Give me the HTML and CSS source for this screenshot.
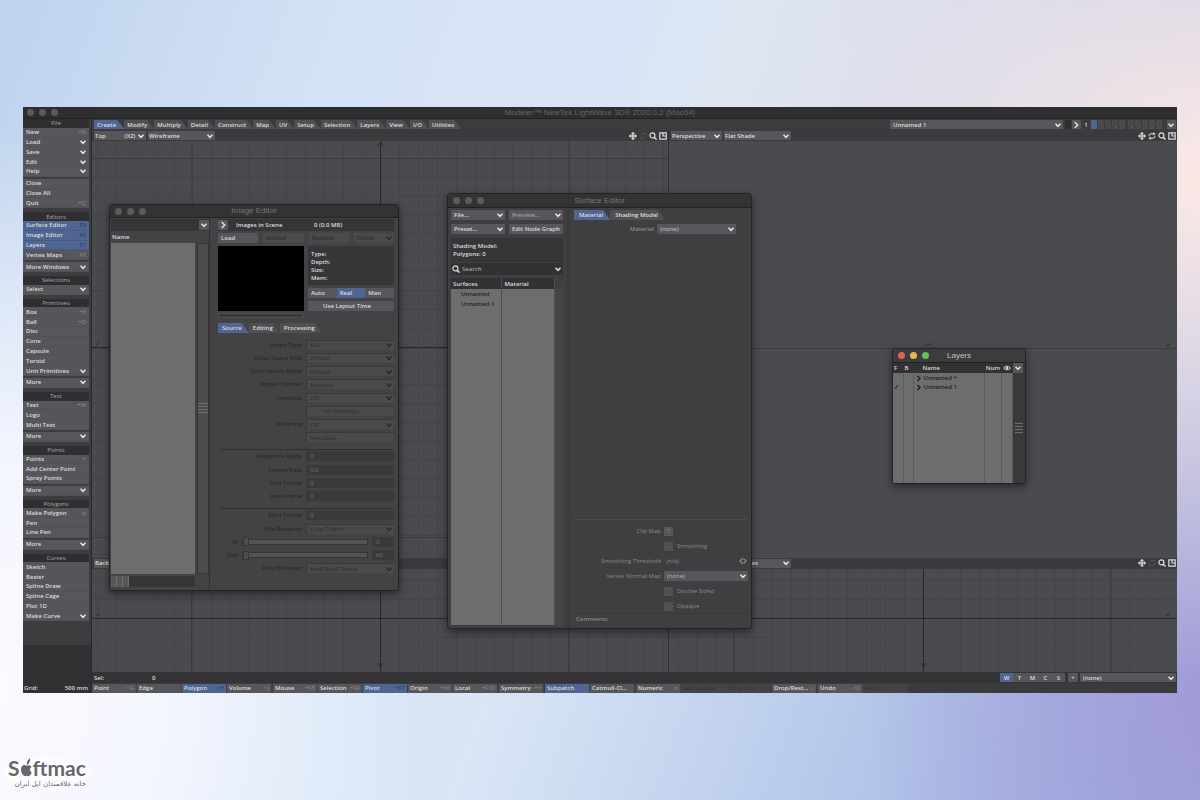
FILE: index.html
```html
<!DOCTYPE html>
<html lang="en">
<head>
<meta charset="utf-8">
<title>Modeler</title>
<link rel="stylesheet" href="styles.css">
</head>
<body>
<svg class="defs" aria-hidden="true">
  <symbol id="move" viewBox="0 0 8 8"><path d="M4 0l1.6 1.8H4.6v1.6h1.6V2.4L8 4 6.2 5.6V4.6H4.6v1.6h1L4 8 2.4 6.2h1V4.6H1.8v1L0 4l1.8-1.6v1h1.6V1.8h-1z" fill="currentColor" stroke="currentColor" stroke-width=".4"/></symbol>
  <symbol id="spin" viewBox="0 0 8 8"><path d="M1.200 4.400V3.200Q1.200 1.800 2.800 1.800H5.500M6.800 3.600v1.200Q6.800 6.200 5.200 6.200H2.500" fill="none" stroke="currentColor"/><path d="M5 .3L7.600 1.800 5 3.300zM3 7.700L.4 6.200 3 4.700z" fill="currentColor"/></symbol>
  <symbol id="lens" viewBox="0 0 8 8"><circle cx="3.400" cy="3.400" r="2.500" fill="none" stroke="currentColor" stroke-width="1.200"/><path d="M5.200 5.200L7.600 7.600" stroke="currentColor" stroke-width="1.500"/></symbol>
  <symbol id="maxi" viewBox="0 0 8 8"><path d="M.8.8h6.4v6.400H.8zM4 1v3h3" fill="none" stroke="currentColor" stroke-width="1.200"/></symbol>
  <symbol id="chev" viewBox="0 0 8 8"><path d="M1.500 2.700L4 5.300 6.500 2.700" fill="none" stroke="currentColor" stroke-width="1.500"/></symbol>
  <symbol id="next" viewBox="0 0 8 8"><path d="M2.700 1L5.700 4 2.700 7" fill="none" stroke="currentColor" stroke-width="1.600"/></symbol>
  <symbol id="eye" viewBox="0 0 8 8"><path d="M.6 4Q4 .2 7.400 4 4 7.800.6 4z" fill="none" stroke="currentColor"/><circle cx="4" cy="4" r="1.200" fill="currentColor"/></symbol>
  <symbol id="step" viewBox="0 0 8 8"><path d="M3 1.800L1 4l2 2.200M5 1.800L7 4 5 6.200M3 2h2M3 6h2" fill="none" stroke="currentColor" stroke-width="1.200"/></symbol>
</svg>

<div class="app">
  <header class="titlebar main-title"><span class="lights"><i></i><i></i><i></i></span><h1>Modeler™ NewTek LightWave 3D® 2020.0.2 (Mac64)</h1></header>

  <div class="workspace">
    <aside class="sidebar">
      <nav class="palette">
        <h2>File</h2>
        <button>New<kbd>+N</kbd></button>
        <button class="drop">Load</button>
        <button class="drop">Save</button>
        <button class="drop">Edit</button>
        <button class="drop">Help</button>
        <button class="split">Close</button>
        <button>Close All</button>
        <button>Quit<kbd>+Q</kbd></button>
        <h2>Editors</h2>
        <button class="on">Surface Editor<kbd>F5</kbd></button>
        <button class="on">Image Editor<kbd>F6</kbd></button>
        <button class="on">Layers<kbd>F7</kbd></button>
        <button>Vertex Maps<kbd>F8</kbd></button>
        <button class="drop split">More Windows</button>
        <h2>Selections</h2>
        <button class="drop">Select</button>
        <h2>Primitives</h2>
        <button>Box<kbd>+X</kbd></button>
        <button>Ball<kbd>+O</kbd></button>
        <button>Disc</button>
        <button>Cone</button>
        <button>Capsule</button>
        <button>Toroid</button>
        <button class="drop">Unit Primitives</button>
        <button class="drop split">More</button>
        <h2>Text</h2>
        <button>Text<kbd>+W</kbd></button>
        <button>Logo</button>
        <button>Multi Text</button>
        <button class="drop split">More</button>
        <h2>Points</h2>
        <button>Points<kbd>+</kbd></button>
        <button>Add Center Point</button>
        <button>Spray Points</button>
        <button class="drop split">More</button>
        <h2>Polygons</h2>
        <button>Make Polygon<kbd>p</kbd></button>
        <button>Pen</button>
        <button>Line Pen</button>
        <button class="drop split">More</button>
        <h2>Curves</h2>
        <button>Sketch</button>
        <button>Bezier</button>
        <button>Spline Draw</button>
        <button>Spline Cage</button>
        <button>Plot 1D</button>
        <button class="drop">Make Curve</button>
      </nav>
      <div class="info">
        <p><span>Grid:</span><span>500 mm</span></p>
      </div>
    </aside>

    <main class="stage">
      <div class="tabbar">
        <nav class="tabs">
          <button class="on">Create</button><button>Modify</button><button>Multiply</button><button>Detail</button><button>Construct</button><button>Map</button><button>UV</button><button>Setup</button><button>Selection</button><button>Layers</button><button>View</button><button>I/O</button><button>Utilities</button>
        </nav>
        <div class="layerbar">
          <select class="object" aria-label="Object"><option>Unnamed 1</option></select>
          <i class="blank"></i>
          <button class="mini" aria-label="Next bank"><svg><use href="#next"/></svg></button>
          <span class="bank">1</span>
          <span class="cells"><i class="on"></i><i></i><i></i><i></i><i></i><i class="gap"></i><i></i><i></i><i></i><i></i></span>
          <button class="mini" aria-label="Layer menu"><svg><use href="#chev"/></svg></button>
        </div>
      </div>

      <div class="views">
        <section class="view">
          <div class="viewbar">
            <select class="axis" aria-label="View"><option>Top &nbsp; &nbsp; &nbsp; &nbsp; &nbsp; &nbsp;(XZ)</option></select>
            <select class="shade" aria-label="Render style"><option>Wireframe</option></select>
            <span class="tools"><svg><use href="#move"/></svg><svg class="dim"><use href="#spin"/></svg><svg><use href="#lens"/></svg><svg><use href="#maxi"/></svg></span>
          </div>
          <svg class="canvas">
            <defs>
              <pattern id="minor" x="5.750" y="17" width="18.850" height="18.850" patternUnits="userSpaceOnUse"><path d="M0 .5H19M.5 0V19" stroke="#434448"/></pattern>
              <pattern id="major" x="99.500" y="17" width="188.500" height="189.500" patternUnits="userSpaceOnUse"><path d="M0 .5H189M.5 0V190" stroke="#3a3b3e"/></pattern>
            </defs>
            <rect width="100%" height="100%" fill="url(#minor)"/><rect width="100%" height="100%" fill="url(#major)"/>
            <path d="M288.500 0V600M0 206.500H600" stroke="#28292b"/><path d="M286 5l2.500-4 2.500 4M4 204l3-2" stroke="#28292b" fill="none"/>
          </svg>
        </section>
        <section class="view">
          <div class="viewbar">
            <select class="proj" aria-label="View"><option>Perspective</option></select>
            <select class="shade" aria-label="Render style"><option>Flat Shade</option></select>
            <span class="tools"><svg><use href="#move"/></svg><svg><use href="#spin"/></svg><svg><use href="#lens"/></svg><svg><use href="#maxi"/></svg></span>
          </div>
          <svg class="canvas"><path d="M0 207.500H520" stroke="#3c3d40"/><path d="M256 206l3-3 3 1M497 205l4-2" stroke="#2c2d30" fill="none"/></svg>
        </section>
        <section class="view">
          <div class="viewbar">
            <select class="axis" aria-label="View"><option>Back &nbsp; &nbsp; (XY)</option></select>
            <select class="shade" aria-label="Render style"><option>Wireframe</option></select>
            <span class="tools"><svg><use href="#move"/></svg><svg class="dim"><use href="#spin"/></svg><svg><use href="#lens"/></svg><svg><use href="#maxi"/></svg></span>
          </div>
          <svg class="canvas">
            <defs><pattern id="minor2" x="5.750" y="11" width="18.850" height="18.850" patternUnits="userSpaceOnUse"><path d="M0 .5H19M.5 0V19" stroke="#434448"/></pattern></defs>
            <rect width="100%" height="100%" fill="url(#minor2)"/>
            <path d="M99.500 0V110M476.500 0V110" stroke="#3a3b3e"/>
            <path d="M288.500 0V110M0 49.500H600" stroke="#28292b"/><path d="M286 94l2.500 4 2.500-4M4 47l3-2" stroke="#28292b" fill="none"/>
          </svg>
        </section>
        <section class="view">
          <div class="viewbar">
            <select class="proj" aria-label="View"><option>Right (ZY)</option></select>
            <select class="shade" aria-label="Render style"><option>Color Faces</option></select>
            <span class="tools"><svg><use href="#move"/></svg><svg class="dim"><use href="#spin"/></svg><svg><use href="#lens"/></svg><svg><use href="#maxi"/></svg></span>
          </div>
          <svg class="canvas">
            <defs><pattern id="minor3" x="8.500" y="11" width="18.850" height="18.850" patternUnits="userSpaceOnUse"><path d="M0 .5H19M.5 0V19" stroke="#434448"/></pattern></defs>
            <rect width="100%" height="100%" fill="url(#minor3)"/>
            <path d="M64.500 0V110M441.500 0V110" stroke="#3a3b3e"/>
            <path d="M254.500 0V110M0 49.500H520" stroke="#28292b"/><path d="M252 94l2.500 4 2.500-4M497 47l4-2" stroke="#28292b" fill="none"/>
          </svg>
        </section>
      </div>

      <div class="selbar">
        <span class="sel-label">Sel:</span><span>0</span>
        <span class="maps"><button class="on">W</button><button>T</button><button>M</button><button>C</button><button>S</button><button class="plus">+</button><select class="vmap" aria-label="Vertex map"><option>(none)</option></select></span>
      </div>
      <div class="modes">
        <button>Point<kbd>^G</kbd></button><button>Edge</button><button class="on">Polygon<kbd>^H</kbd></button><button>Volume<kbd>^J</kbd></button>
        <button class="lead">Mouse<kbd>+F5</kbd></button><button>Selection<kbd>+F8</kbd></button><button class="on">Pivot<kbd>+F7</kbd></button><button>Origin<kbd>+F6</kbd></button><button>Local<kbd>+F10</kbd></button>
        <button class="lead">Symmetry<kbd>+Y</kbd></button>
        <button class="lead on">Subpatch</button><button>Catmull-Cl...</button>
        <button class="lead">Numeric<kbd>n</kbd></button><button disabled>Get Surface</button><button disabled>Drop Tool</button>
        <button class="lead">Drop/Rest...<kbd>/</kbd></button>
        <button class="lead">Undo<kbd>^Z</kbd></button><button disabled>Redo</button>
      </div>
    </main>
  </div>

  <section class="window image-editor">
    <header class="titlebar"><span class="lights"><i></i><i></i><i></i></span><h2>Image Editor</h2></header>
    <div class="ie-body">
      <div class="ie-left">
        <div class="ie-filter"><button class="mini" aria-label="Filter"><svg><use href="#chev"/></svg></button></div>
        <b class="col-name">Name</b>
        <div class="ie-list"></div>
        <div class="vscroll"><i class="grip"></i></div>
        <div class="hscroll"><i class="thumb"></i></div>
      </div>
      <div class="ie-right">
        <div class="scene"><button class="mini" aria-label="Expand"><svg><use href="#next"/></svg></button><b>Images in Scene</b><b>0 (0.0 MB)</b></div>
        <div class="four"><button>Load</button><button disabled>Reload</button><button disabled>Replace</button><select disabled aria-label="Clone"><option>Clone</option></select></div>
        <div class="preview">
          <div><div class="black"></div><div class="strip"></div></div>
          <div class="meta">
            <dl><dt>Type:</dt><dt>Depth:</dt><dt>Size:</dt><dt>Mem:</dt></dl>
            <div class="seg"><button>Auto</button><button class="on">Real</button><button>Man</button></div>
            <button class="wide">Use Layout Time</button>
          </div>
        </div>
        <nav class="tabs"><button class="on">Source</button><button>Editing</button><button>Processing</button></nav>
        <form class="fields">
          <label><span>Image Type</span><select disabled><option>Still</option></select></label>
          <label><span>Color Space RGB</span><select disabled><option>Default</option></select></label>
          <label><span>Color Space Alpha</span><select disabled><option>Default</option></select></label>
          <label><span>Alpha Channel</span><select disabled><option>Enabled</option></select></label>
          <label><span>Interlace</span><select disabled><option>Off</option></select></label>
          <div class="field"><span></span><button class="mid" type="button" disabled>Use MipMaps</button></div>
          <label><span>Dithering</span><select disabled><option>Off</option></select></label>
          <div class="field"><span></span><button type="button" disabled>Metadata</button></div>
          <label class="rule"><span>Sequence Digits</span><input type="text" value="0"></label>
          <label><span>Frame Rate</span><input type="text" value="0.0"></label>
          <label><span>First Frame</span><input type="text" value="0"></label>
          <label><span>Last Frame</span><input type="text" value="0"></label>
          <label class="rule"><span>Start Frame</span><input type="text" value="0"></label>
          <label><span>Pre Behavior</span><select disabled><option>Loop Frame</option></select></label>
          <div class="field slide"><label for="in">In</label><input id="in" type="range" value="0"><input type="text" value="0" aria-label="In frame"></div>
          <div class="field slide"><label for="out">Out</label><input id="out" type="range" value="0"><input type="text" value="60" aria-label="Out frame"></div>
          <label><span>Post Behavior</span><select disabled><option>Hold Start Frame</option></select></label>
        </form>
      </div>
    </div>
  </section>

  <section class="window surface-editor">
    <header class="titlebar"><span class="lights"><i></i><i></i><i></i></span><h2>Surface Editor</h2></header>
    <div class="se-body">
      <div class="se-left">
        <div class="pair"><select aria-label="File"><option>File...</option></select><select class="soft" aria-label="Preview"><option>Preview...</option></select><select aria-label="Preset"><option>Preset...</option></select><button>Edit Node Graph</button></div>
        <div class="about">Shading Model:<br>Polygons: 0</div>
        <label class="search"><svg><use href="#lens"/></svg><input type="text" placeholder="Search" aria-label="Search"><svg><use href="#chev"/></svg></label>
        <div class="surfaces">
          <table><thead><tr><th class="first">Surfaces</th><th>Material</th></tr></thead><tbody><tr><td>Unnamed</td><td></td></tr><tr><td>Unnamed 1</td><td></td></tr><tr class="rest"><td></td><td></td></tr></tbody></table>
          <i class="bar"></i>
        </div>
      </div>
      <div class="se-right">
        <nav class="tabs"><button class="on">Material</button><button>Shading Model</button></nav>
        <label class="mat"><span>Material</span><select><option>(none)</option></select></label>
        <div class="options">
          <div class="opt"><span>Clip Map</span><button class="tee">T</button></div>
          <div class="opt"><span></span><label><input type="checkbox">Smoothing</label></div>
          <div class="opt"><label for="thr">Smoothing Threshold</label><span class="thr"><input id="thr" type="text" value="(n/a)"><svg><use href="#step"/></svg></span></div>
          <div class="opt"><label for="vnm">Vertex Normal Map</label><select id="vnm"><option>(none)</option></select></div>
          <div class="opt"><span></span><label><input type="checkbox">Double Sided</label></div>
          <div class="opt"><span></span><label><input type="checkbox">Opaque</label></div>
        </div>
        <div class="comments">Comments</div>
      </div>
    </div>
  </section>

  <section class="window layers">
    <header class="titlebar"><span class="lights color"><i></i><i></i><i></i></span><h2>Layers</h2></header>
    <div class="ly-body">
      <table>
        <colgroup><col class="c1"><col class="c1"><col><col class="c2"><col class="c3"></colgroup>
        <thead><tr><th>F</th><th>B</th><th class="nm">Name</th><th>Num</th><th><svg><use href="#eye"/></svg></th></tr></thead>
        <tbody>
          <tr><td></td><td></td><td><svg><use href="#next"/></svg>Unnamed *</td><td></td><td></td></tr>
          <tr><td>✓</td><td></td><td><svg><use href="#next"/></svg>Unnamed 1</td><td></td><td></td></tr>
          <tr class="rest"><td></td><td></td><td></td><td></td><td></td></tr>
        </tbody>
      </table>
      <div class="ly-side"><button class="mini" aria-label="Layers menu"><svg><use href="#chev"/></svg></button><i class="grip"></i></div>
    </div>
  </section>
</div>

<footer class="brand">
  <div class="word">S<svg viewBox="0 0 14 20"><path d="M7 8C5 6.500 1 7.500 1 12s3 7.500 4.500 7.500c.8 0 1-.5 1.800-.5s1 .5 1.700.5c1.500 0 3.200-2.500 3.700-4-2.500-1.200-2.500-4.700-.2-6C11 7 8.500 7.200 7 8zM7.500 7C7 4.500 8 2 10.500 0 11.500 2.500 10 6 7.500 7z" fill="currentColor"/></svg>ftmac</div>
  <div class="tag" lang="fa" dir="rtl">خانه علاقمندان اپل ایران</div>
</footer>
</body>
</html>
```
FILE: styles.css
```css
:root {
  --btn: #57575b;
  --panel: #434345;
  --dark: #363638;
  --blue: #4f6693;
  --ink: #dcdcdd;
  --chev: url("data:image/svg+xml,%3Csvg xmlns='http://www.w3.org/2000/svg' width='8' height='8'%3E%3Cpath d='M1.500 2.700L4 5.300 6.500 2.700' fill='none' stroke='%23e4e4e4' stroke-width='1.500'/%3E%3C/svg%3E");
  --chev-off: url("data:image/svg+xml,%3Csvg xmlns='http://www.w3.org/2000/svg' width='8' height='8'%3E%3Cpath d='M1.500 2.700L4 5.300 6.500 2.700' fill='none' stroke='%23222224' stroke-width='1.200'/%3E%3C/svg%3E");
}

* { box-sizing: border-box; }

body {
  margin: 0;
  min-height: 100vh;
  display: flex;
  flex-direction: column;
  padding: 107px 23px 0;
  font: 600 6px/8px "Open Sans", sans-serif;
  color: var(--ink);
  background:
    radial-gradient(ellipse 420px 560px at 0 86%, #fcf9ff 0, #f3f6fe 40%, rgba(240, 247, 255, 0) 100%),
    radial-gradient(ellipse 620px 500px at 102% 22%, #fdeae6 0, rgba(246, 230, 236, 0) 100%),
    radial-gradient(ellipse 360px 360px at 102% 88%, #a29bd8 0, rgba(160, 160, 218, 0) 100%),
    linear-gradient(110deg, #bfd2ee 0, #d5e3f6 25%, #d9e6f6 50%, #b6c8ea 75%, #97a7dc 100%);
}

h1, h2, p, dl { margin: 0; font: inherit; }
b { font-weight: inherit; }
button, select, input, kbd { font: inherit; color: inherit; }
button, select, input {
  margin: 0;
  border: 0;
  border-radius: 0;
  padding: 0 3px;
  background-color: var(--btn);
  min-width: 0;
  appearance: none;
  text-align: left;
}
select { background: var(--btn) var(--chev) no-repeat right 1px center; height: 10px; padding-right: 8px; }
select:disabled { color: #2c2c2e; background: #4a4a4c var(--chev-off) no-repeat right 1px center; opacity: 1; }
button:disabled { color: #2f2f31; background: #4a4a4c; }
.on { background-color: var(--blue); }
svg { width: 8px; height: 8px; flex: none; display: block; }
.defs { position: absolute; width: 0; height: 0; }
.mini { width: 10px; height: 10px; padding: 1px; }

/* application frame */
.app {
  position: relative;
  display: flex;
  flex-direction: column;
  height: calc(100vh - 214px);
  min-height: 586px;
  background: #353537;
}
.titlebar {
  display: grid;
  grid-template-columns: 1fr auto 1fr;
  align-items: center;
  height: 14px;
  background: #333335;
  border-bottom: 1px solid #222224;
  color: #77777a;
  font: 400 8px/10px "Liberation Sans", sans-serif;
}
.main-title { height: 12px; background: #2e2e30; color: #656568; }
.lights { display: flex; gap: 5px; padding-left: 4px; }
.window .lights { padding-left: 5px; }
.lights i { width: 7px; height: 7px; border-radius: 50%; background: #5b5b5d; }
.lights.color i { background: #e0605a; }
.lights.color i + i { background: #e8b84c; }
.lights.color i + i + i { background: #68c24f; }
.workspace { flex: 1; display: flex; min-height: 0; }

/* tool palette */
.sidebar { width: 69px; display: flex; flex-direction: column; background: #3d3d3f; padding-right: 2px; border-right: 1px solid #29292b; }
.palette { flex: 502 1 0; display: flex; flex-direction: column; }
.palette h2, .palette button { flex: 1 1 0; min-height: 0; display: flex; align-items: center; white-space: nowrap; }
.palette h2 { justify-content: center; background: #2f2f31; color: #a9a9ab; font-weight: 400; margin-top: 4px; }
.palette h2:first-child { margin-top: 0; }
.palette button { justify-content: space-between; padding: 0 3px; border-bottom: 1px solid #525256; }
.palette .on { border-color: #465a84; }
.palette .split { margin-top: 2px; }
.drop { background-image: var(--chev); background-repeat: no-repeat; background-position: right 2px center; }
kbd { color: #8d8d91; font-weight: 400; }
.on kbd { color: #26365c; }
.info { flex: 48 1 0; margin-top: 24px; background: #313133; display: flex; align-items: flex-end; margin-right: -2px; }
.info p { flex: 1; display: flex; justify-content: space-between; padding: 1px 3px 1px 1px; }

/* stage */
.stage { flex: 1; min-width: 0; display: flex; flex-direction: column; }
.tabbar, .layerbar, .tabs, .viewbar, .tools, .cells, .selbar, .maps, .modes { display: flex; align-items: center; }
.tabbar { height: 11px; justify-content: space-between; padding: 0 1px 0 2px; background: #3c3c3e; }
.tabs button { height: 9px; padding: 0 7px 0 3px; clip-path: polygon(0 0, calc(100% - 7px) 0, 100% 100%, 0 100%); background-color: #505053; }
.tabs .on { background-color: var(--blue); }
.tabbar .tabs .on { padding-right: 8px; }
.layerbar { gap: 1px; width: 286px; }
.layerbar select { flex: 1; height: 9px; }
.layerbar .mini { width: 9px; height: 9px; padding: 0; }
.blank { width: 6px; height: 9px; margin-left: 1px; background: #2f2f31; }
.bank { width: 8px; text-align: center; }
.cells { gap: 1px; margin-right: 4px; }
.cells i { width: 6px; height: 9px; background: linear-gradient(135deg, #4c4c4f 45%, #343436 50%, #4c4c4f 55%); }
.cells .on { background: var(--blue); }
.cells .gap { margin-left: 2px; }
.views { flex: 1; min-height: 0; display: grid; grid-template: minmax(0, 427fr) minmax(0, 114fr) / minmax(0, 577fr) minmax(0, 508fr); }
.view { display: flex; flex-direction: column; min-height: 0; border-right: 1px solid #303133; }
.view:nth-child(even) { border: 0; }
.viewbar { height: 11px; gap: 2px; padding: 0 1px 0 2px; background: #3b3b3d; flex: none; }
.viewbar select { height: 9px; padding-left: 1px; }
.axis { width: 52px; }
.proj { width: 51px; }
.shade { width: 67px; }
.tools { margin-left: auto; gap: 2px; }
.dim { opacity: .12; }
.canvas { flex: 1; width: 100%; min-height: 0; background: #4a4b4e; }
.selbar { height: 11px; padding: 0 1px 0 2px; background: #343436; }
.sel-label { width: 58px; }
.maps { margin-left: auto; width: 176px; }
.maps button { width: 13px; height: 9px; text-align: center; padding: 0; }
.maps .plus { width: 10px; margin: 0 2px 0 3px; }
.vmap { flex: 1; height: 9px; }
.modes { height: 10px; background: #3b3b3d; }
.modes button { flex: 0 0 45px; height: 9px; display: flex; justify-content: space-between; align-items: center; padding: 0 2px; border-right: 1px solid #414143; white-space: nowrap; overflow: hidden; }
.modes .lead { margin-left: 1px; }
.modes button:disabled { color: #303032; background: #444446; font-weight: 400; }

/* floating windows */
.window { position: absolute; display: flex; flex-direction: column; background: var(--panel); border: 1px solid #242426; border-radius: 3px; box-shadow: 0 3px 8px rgba(0, 0, 0, .45); overflow: hidden; }
.window .titlebar { flex: none; }
.grip { height: 12px; background: repeating-linear-gradient(#707072 0 1px, transparent 1px 3px); }

.image-editor { left: 86px; top: 97px; width: 290px; height: 387px; }
.image-editor .titlebar { height: 13px; }
.ie-body { flex: 1; min-height: 0; display: flex; }
.ie-left { width: 100px; padding: 1px 0 3px 1px; display: grid; grid-template: 12px 12px 1fr 13px / 84px 12px; column-gap: 2px; border-right: 1px solid #333335; }
.ie-filter { grid-column: 1 / 3; background: var(--dark); display: flex; justify-content: flex-end; align-items: center; }
.col-name { grid-column: 1 / 3; padding: 2px 1px; }
.ie-list { background: #6d6d6f; }
.vscroll { background: #4c4c4e; border: 1px solid #353537; display: flex; flex-direction: column; justify-content: center; }
.hscroll { background: var(--dark); margin: 2px 0 0; }
.thumb { display: block; width: 18px; height: 11px; background: repeating-linear-gradient(90deg, #58585a 0 5px, #6e6e70 5px 6px); }
.ie-right { flex: 1; min-width: 0; padding: 1px 4px 15px 8px; display: flex; flex-direction: column; }
.scene { height: 12px; display: grid; grid-template-columns: 10px 1fr 80px; column-gap: 8px; align-items: center; background: var(--dark); }
.four { margin-top: 2px; display: grid; grid-template-columns: repeat(4, 1fr); gap: 5px; }
.four button, .four select { height: 10px; }
.preview { margin-top: 3px; display: grid; grid-template-columns: 86px 1fr; gap: 4px; height: 73px; }
.black { height: 65px; background: #000; }
.strip { height: 5px; margin-top: 2px; background: #3a3a3c; border: 1px solid #4e4e50; }
.meta { display: flex; flex-direction: column; }
.meta dl { height: 39px; padding: 4px 3px; background: var(--dark); }
.seg { display: flex; margin: 3px 0; }
.seg button { flex: 1; height: 10px; }
.wide { height: 10px; padding: 0 15px; }
.ie-right .tabs { margin: 4px 0 5px; flex: none; }
.ie-right .tabs button { padding-left: 4px; height: 10px; }
.fields { flex: 1; min-height: 0; display: flex; flex-direction: column; color: #29292b; font-weight: 600; }
.fields > * { flex: 1 1 0; min-height: 0; display: grid; grid-template-columns: 84px 1fr; column-gap: 4px; align-items: center; text-align: right; }
.fields select, .fields button, .fields input { height: 10px; width: 100%; border: 1px solid #39393b; border-width: 1px 0 0 1px; font-weight: 400; }
.fields input { background: #3a3a3c; border: 0; color: #77777a; padding-left: 4px; }
.fields .mid { padding-left: 14px; }
.fields .rule { margin-top: 6px; box-shadow: 0 -3px 0 -2px #303032; }
.fields .slide { grid-template-columns: 20px 1fr 22px; }
.fields [type="range"] { height: 6px; padding: 0; background: #535355; border: 1px solid #37373a; }
input::-webkit-slider-thumb { appearance: none; width: 6px; height: 9px; background: #4d4d4f; border: 1px solid #373739; }

.surface-editor { left: 424px; top: 86px; width: 305px; height: 436px; background: #3f3f41; }
.se-body { flex: 1; min-height: 0; display: flex; }
.se-left { width: 121px; padding: 2px 4px 3px 3px; display: flex; flex-direction: column; border-right: 2px solid #39393b; }
.pair { display: grid; grid-template-columns: 54px 1fr; gap: 4px; }
.pair button { height: 10px; white-space: nowrap; }
.soft { color: #a0a0a2; }
.about { margin-top: 4px; height: 24px; padding: 4px 2px; background: var(--dark); }
.search { margin-top: 1px; height: 12px; display: flex; align-items: center; gap: 1px; padding: 0 1px; background: #323234; }
.search input { flex: 1; background: none; padding: 0 1px; }
.search input::placeholder { color: #a0a0a2; opacity: 1; }
.surfaces { flex: 1; min-height: 0; margin-top: 3px; display: flex; }
table { border-collapse: collapse; table-layout: fixed; }
th { text-align: left; font-weight: inherit; }
th, td { height: 10px; line-height: 8px; padding: 0 3px; border-right: 1px solid #4e4e50; }
.surfaces table { flex: 1; height: 100%; }
.surfaces th { background: #323234; height: 11px; }
.surfaces .first { width: 50px; padding-left: 2px; }
.surfaces td { background: #6d6d6f; color: #242426; padding: 0 0 0 10px; white-space: nowrap; }
.rest td { height: auto; }
.bar { width: 8px; margin-top: 11px; background: #454547; }
.se-right { flex: 1; min-width: 0; display: flex; flex-direction: column; padding: 2px 3px 5px 5px; color: #8a8a8c; }
.se-right .tabs { color: var(--ink); }
.se-right .tabs button { height: 10px; padding-left: 5px; }
.se-right select { color: #b5b5b7; }
.mat { margin: 4px 12px 0 0; display: grid; grid-template-columns: 80px 1fr; column-gap: 3px; align-items: center; text-align: right; }
.options { margin-top: auto; padding-top: 4px; border-top: 1px solid #4a4a4c; display: grid; grid-auto-rows: 14px; row-gap: 1px; }
.opt { display: grid; grid-template-columns: 87px 1fr; column-gap: 3px; align-items: center; font-weight: 400; text-align: right; }
.opt label { display: flex; align-items: center; justify-content: flex-end; gap: 4px; }
.opt span + label { justify-content: flex-start; }
.opt [type="checkbox"] { width: 9px; height: 9px; padding: 0; background: #525254; }
.tee { width: 9px; height: 9px; text-align: center; padding: 0; }
.thr { display: flex; align-items: center; min-width: 0; padding-right: 1px; }
.thr input { flex: 1; width: 0; background: none; padding: 0 2px; }
.comments { border-top: 1px solid #39393b; padding: 1px 2px 0; }

.layers { left: 869px; top: 241px; width: 134px; height: 136px; }
.layers .titlebar { background: #3c3c3e; color: #c4c4c6; }
.ly-body { flex: 1; min-height: 0; display: flex; }
.layers table { flex: 1; height: 100%; }
.layers th { background: #323234; height: 10px; border-color: #323234; }
.layers td { background: #6d6d6f; color: #1e1e20; border-color: #5c5c5e; height: 9px; }
.layers .rest td { height: auto; }
.layers th, .layers td { padding: 0 1px; }
.layers .nm { padding-left: 9px; }
.layers td svg { display: inline-block; vertical-align: -2px; width: 7px; height: 7px; margin-right: 2px; }
.c1 { width: 10px; }
.c2 { width: 17px; }
.c3 { width: 11px; }
.ly-side { width: 12px; display: flex; flex-direction: column; background: #3a3a3c; }
.ly-side .grip { margin: 50px 2px 0; }

.brand { margin: 62px 0 0 -23px; width: 94px; padding: 1px 8px; color: #68686c; background: radial-gradient(closest-side, rgba(255, 255, 255, .7) 80%, rgba(255, 255, 255, 0)); }
.word { display: flex; align-items: center; font: 700 21px/23px Lato, sans-serif; }
.word svg { width: 13px; height: 19px; }
.tag { font: 400 7px/10px "DejaVu Sans", sans-serif; white-space: nowrap; }
```
